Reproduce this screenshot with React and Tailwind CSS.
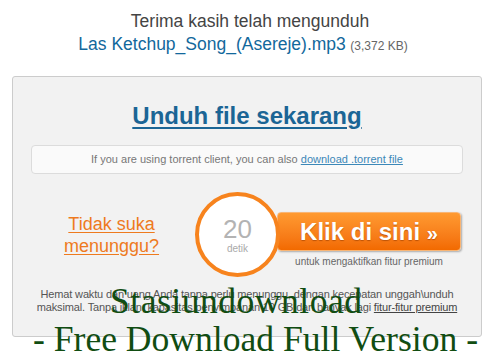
export default function App() {
  return (
    <div className="relative w-[500px] h-[359px] overflow-hidden bg-white font-['Liberation_Sans',Arial,sans-serif]">
      {/* Header */}
      <div className="pt-[10px] text-center">
        <div className="text-[17.5px] leading-[23px] text-[#444]">Terima kasih telah mengunduh</div>
        <div className="pr-[14px] leading-[23px]">
          <span className="text-[17.5px] text-[#12689c]">Las Ketchup_Song_(Asereje).mp3</span>{" "}
          <span className="text-[12px] text-[#666]">(3,372 KB)</span>
        </div>
      </div>

      {/* Panel */}
      <div className="ml-[12px] mt-[18px] w-[470px] rounded-[3px] border border-[#cccccc] bg-[#f2f2f2] pt-[25px] pb-[22px]">
        <div className="text-center text-[24px] leading-[28px] font-bold">
          <a className="text-[#1b6595] underline decoration-2 underline-offset-[3px]">Unduh file sekarang</a>
        </div>

        <div className="mx-[18px] mt-[15px] h-[29px] rounded-[4px] border border-[#dcdcdc] bg-[#fafafa] text-center text-[11px] leading-[27px] text-[#777]">
          If you are using torrent client, you can also{" "}
          <a className="text-[#3c88b8] underline">download .torrent file</a>
        </div>

        {/* Countdown row */}
        <div className="mt-[18px] flex items-start">
          <div className="flex h-[85px] w-[182px] items-center justify-center pl-[15px]">
            <a className="text-center text-[18px] leading-[22px] text-[#ee7a1e] underline underline-offset-2">
              Tidak suka
              <br />
              menunggu?
            </a>
          </div>
          <div className="relative z-10 flex h-[85px] w-[85px] flex-col items-center justify-center rounded-full border-[4px] border-[#f7831d] bg-white">
            <div className="text-[26px] leading-[28px] text-[#b3b3b3]">20</div>
            <div className="text-[10px] leading-[12px] text-[#aaa]">detik</div>
          </div>
          <div className="-ml-[3px] mt-[20px] flex flex-col items-center">
            <div className="flex h-[39px] w-[184px] items-center justify-center rounded-[4px] border border-[#f9b574] bg-gradient-to-b from-[#ff9a30] to-[#f26a00] shadow-[1px_1px_2px_rgba(0,0,0,0.3)]">
              <span className="text-[24px] font-bold text-white [text-shadow:0_1px_1px_rgba(150,60,0,0.6)]">
                Klik di sini <span className="text-[20px]">»</span>
              </span>
            </div>
            <div className="mt-[4px] text-[10px] leading-[14px] text-[#666]">untuk mengaktifkan fitur premium</div>
          </div>
        </div>

        <div className="mt-[11px] whitespace-nowrap text-center text-[11px] leading-[13px] tracking-[-0.15px] text-[#555]">
          Hemat waktu dan uang Anda tanpa perlu menunggu, dengan kecepatan unggah\unduh
          <br />
          maksimal. Tanpa iklan, kapasitas penyimpanan 10 GB dan banyak lagi{" "}
          <a className="text-[#444] underline">fitur-fitur premium</a>
        </div>
      </div>

      {/* Watermark */}
      <div className="pointer-events-none absolute left-[110px] top-[283px] whitespace-nowrap font-['Liberation_Serif',serif] text-[35.6px] leading-[36px] tracking-[0.5px] text-[#114d12]">
        Stasiundownload
      </div>
      <div className="pointer-events-none absolute left-[33px] top-[321px] whitespace-nowrap font-['Liberation_Serif',serif] text-[35.6px] leading-[36px] text-[#114d12]">
        - Free Download Full Version -
      </div>
    </div>
  );
}
